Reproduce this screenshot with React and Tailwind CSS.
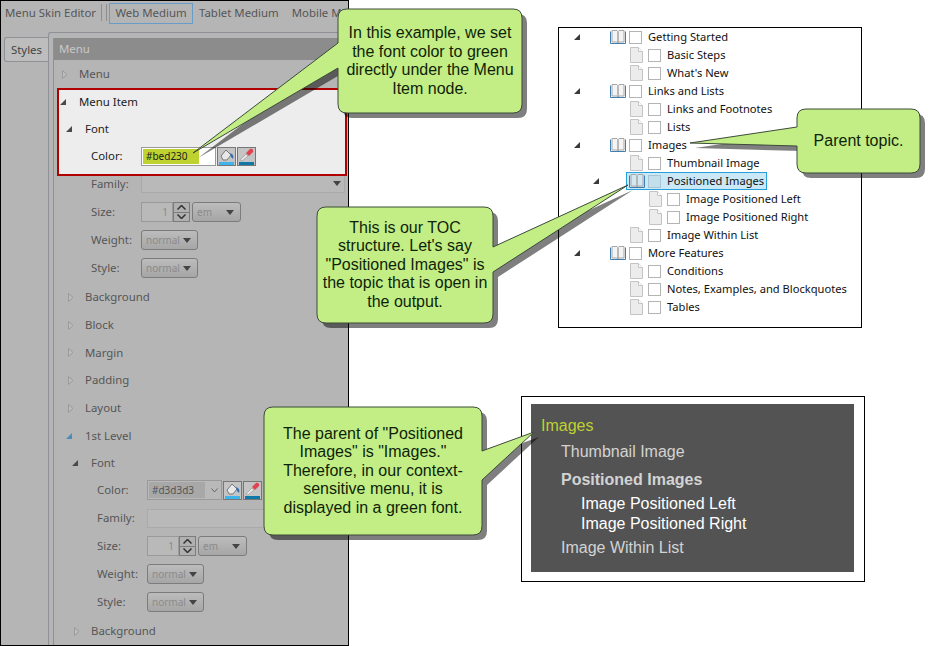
const uiFont = "font-['Noto_Sans',sans-serif] text-[11.4px] leading-none";

function Arrow({ open, blue, tree }) {
  if (open) {
    return (
      <svg width="6" height="6" viewBox="0 0 6 6" className="shrink-0">
        <polygon points="6,0 6,6 0,6" fill={blue ? "#4a8dbb" : tree ? "#3a3a3a" : "#4a4a4a"} />
      </svg>
    );
  }
  return (
    <svg width="6" height="9" viewBox="0 0 6 9" className="shrink-0 ml-[2px]">
      <polygon points="0.5,0.5 5,4.5 0.5,8.5" fill="#bdbdbd" stroke="#9a9a9a" />
    </svg>
  );
}

function TreeRow({ pad, h = "h-[28px]", extra = "", open, blue, dark, label }) {
  return (
    <div className={`flex items-center ${h} ${pad} ${extra}`}>
      <span className="w-[19px] flex items-center">
        <Arrow open={open} blue={blue} />
      </span>
      <span className={dark ? "text-[#222]" : "text-[#555]"}>{label}</span>
    </div>
  );
}

function Field({ pad, h = "h-[28px]", label, dark, children }) {
  return (
    <div className={`flex items-center ${h} ${pad}`}>
      <span className={`w-[50px] ${dark ? "text-[#222]" : "text-[#555]"}`}>{label}</span>
      {children}
    </div>
  );
}

function Caret() {
  return (
    <svg width="8" height="5" viewBox="0 0 8 5" className="shrink-0">
      <polygon points="0,0 8,0 4,5" fill="#444" />
    </svg>
  );
}

function Select({ w = "w-[57px]", text = "normal" }) {
  return (
    <div className={`${w} h-[20px] flex items-center justify-between pl-[4px] pr-[6px] rounded-[3px] border border-[#7c7c7c] bg-gradient-to-b from-[#bcbcbc] to-[#a6a6a6] text-[10px] text-[#8b8b8b]`}>
      {text}
      <Caret />
    </div>
  );
}

function Size() {
  return (
    <div className="flex items-center">
      <div className="w-[32px] h-[20px] border border-[#9a9a9a] bg-[#b9b9b9] flex items-center justify-end pr-[4px] text-[10px] text-[#8b8b8b]">1</div>
      <div className="w-[17px] h-[20px] flex flex-col border border-[#7c7c7c] bg-[#b0b0b0]">
        <div className="flex-1 flex items-center justify-center border-b border-[#7c7c7c]">
          <svg width="9" height="5" viewBox="0 0 9 5"><path d="M0.5 4.5 L4.5 0.5 L8.5 4.5" fill="none" stroke="#333" strokeWidth="1.5" /></svg>
        </div>
        <div className="flex-1 flex items-center justify-center">
          <svg width="9" height="5" viewBox="0 0 9 5"><path d="M0.5 0.5 L4.5 4.5 L8.5 0.5" fill="none" stroke="#333" strokeWidth="1.5" /></svg>
        </div>
      </div>
      <Select w="w-[49px] ml-[2px]" text="em" />
    </div>
  );
}

function Bucket() {
  return (
    <svg width="17" height="17" viewBox="0 0 17 17">
      <path d="M3 8 L8 2 L13 7 L9 12 H5 Z" fill="#e8e8e8" stroke="#777" />
      <path d="M12 5 C15 6 16 8 15 11 L13 9 Z" fill="#2f6fb5" />
      <rect x="1" y="14" width="15" height="3" fill="#3db4ea" />
    </svg>
  );
}

function Dropper() {
  return (
    <svg width="17" height="17" viewBox="0 0 17 17">
      <path d="M2 12 L8 6 L10 8 L4 13 Z" fill="#e6e6e6" stroke="#999" strokeWidth="0.7" />
      <path d="M8 5 L12 1 C14 0 16 2 15 4 L11 8 Z" fill="#e0434f" />
      <rect x="1" y="14" width="15" height="3" fill="#0f78a8" />
    </svg>
  );
}

function ToolButton({ children }) {
  return (
    <div className="w-[19px] h-[19px] ml-[1px] flex items-center justify-center border border-[#777] bg-[#c4c4c4]">
      {children}
    </div>
  );
}

function Book({ dim }) {
  return (
    <svg width="16" height="15" viewBox="0 0 16 15" className="shrink-0">
      <path d="M0.5 1.5 V13.5 H15.5 V1.5" fill="none" stroke="#3f7fb0" />
      <path d="M2 0.5 H7 L8 1.5 V13 L7 12 H2 Z M14 0.5 H9 L8 1.5 V13 L9 12 H14 Z" fill={dim ? "#d4e8f3" : "#f4f4f4"} stroke="#a6a6a6" />
    </svg>
  );
}

function Page() {
  return (
    <svg width="13" height="16" viewBox="0 0 13 16" className="shrink-0 ml-[1px]">
      <path d="M0.5 0.5 H8.5 L12.5 4.5 V15.5 H0.5 Z" fill="#ececec" stroke="#c4c4c4" />
      <path d="M8.5 0.5 V4.5 H12.5" fill="#fff" stroke="#c4c4c4" />
    </svg>
  );
}

const tocRows = [
  ["book", 0, "Getting Started"],
  ["page", 1, "Basic Steps"],
  ["page", 1, "What's New"],
  ["book", 0, "Links and Lists"],
  ["page", 1, "Links and Footnotes"],
  ["page", 1, "Lists"],
  ["book", 0, "Images"],
  ["page", 1, "Thumbnail Image"],
  ["book", 1, "Positioned Images", true],
  ["page", 2, "Image Positioned Left"],
  ["page", 2, "Image Positioned Right"],
  ["page", 1, "Image Within List"],
  ["book", 0, "More Features"],
  ["page", 1, "Conditions"],
  ["page", 1, "Notes, Examples, and Blockquotes"],
  ["page", 1, "Tables"],
];

const gutters = ["w-[51px] pl-[15px]", "w-[70px] pl-[34px]", "w-[89px]"];

function TocRow({ kind, level, text, selected }) {
  return (
    <div className="flex items-center h-[18px]">
      <div className={`${gutters[level]} shrink-0 flex items-center`}>
        {kind === "book" && <Arrow open tree />}
      </div>
      <div className={`flex items-center h-[18px] -ml-[3px] pl-[2px] pr-[2px] border ${selected ? "border-[#26a0da] bg-[#cbe8f6]" : "border-transparent"}`}>
        <span className="w-[19px] flex items-center">{kind === "book" ? <Book dim={selected} /> : <Page />}</span>
        <span className={`w-[13px] h-[13px] mr-[6px] border ${selected ? "border-[#a9c5d3] bg-[#c4dfec]" : "border-[#b4b4b4] bg-white"}`} />
        <span className="text-[#111] font-['Noto_Sans',sans-serif] text-[11.15px] leading-none whitespace-nowrap">{text}</span>
      </div>
    </div>
  );
}

// outline of a rounded box with one pointed tail on its left or right side
function calloutPath(w, h, side, a, b, tx, ty) {
  const r = 9;
  const right = side === "right" ? `V${a} L${tx} ${ty} L${w} ${b} ` : "";
  const left = side === "left" ? `V${b} L${tx} ${ty} L0 ${a} ` : "";
  return `M${r} 0 H${w - r} Q${w} 0 ${w} ${r} ${right}V${h - r} Q${w} ${h} ${w - r} ${h} H${r} Q0 ${h} 0 ${h - r} ${left}V${r} Q0 0 ${r} 0 Z`;
}

function Callout({ box, w, h, side, a, b, tx, ty, children }) {
  const d = calloutPath(w, h, side, a, b, tx, ty);
  return (
    <div className={`absolute z-20 ${box}`}>
      <svg width={w} height={h} viewBox={`0 0 ${w} ${h}`} className="absolute inset-0 overflow-visible">
        <path d={d} fill="#000" fillOpacity="0.5" transform="translate(5 5)" />
        <path d={d} fill="#c2ee85" stroke="#3d4a3a" strokeWidth="1" />
      </svg>
      <div className="relative h-full flex items-center justify-center text-center text-[#101f08] font-['Liberation_Sans',sans-serif] text-[16px] leading-[18.5px]">
        {children}
      </div>
    </div>
  );
}

export default function App() {
  return (
    <div className="relative w-[935px] h-[646px] bg-white flex overflow-hidden">
      {/* Skin editor */}
      <div className={`w-[349px] h-[646px] shrink-0 border border-black bg-[#b5b5b5] overflow-hidden ${uiFont}`}>
        <div className="flex items-center h-[23px] text-[#555] whitespace-nowrap">
          <span className="ml-[4px]">Menu Skin Editor</span>
          <span className="ml-[5px] w-[1px] h-[17px] bg-[#8e8e8e]" />
          <span className="ml-[4px] w-[1px] h-[17px] bg-[#8e8e8e]" />
          <span className="ml-[2px] w-[84px] h-[21px] mt-[1px] flex items-center justify-center border border-[#6a9cc9]">Web Medium</span>
          <span className="ml-[6px]">Tablet Medium</span>
          <span className="ml-[13px]">Mobile M</span>
        </div>
        <div className="flex h-[621px]">
          <div className="w-[47px] shrink-0 pt-[13px] pl-[3px]">
            <div className="h-[25px] w-[44px] flex items-center pl-[6px] text-[#444] bg-[#bdbdbd] border border-r-0 border-[#8e9196] rounded-tl-[3px] rounded-bl-[3px]">Styles</div>
          </div>
          <div className="flex-1 border-t border-l border-[#8e9196] rounded-tl-[3px] mt-[8px] pl-[4px] pt-[5px]">
            <div className="border-l border-[#8e9196] h-full">
              <div className="h-[22px] flex items-center pl-[5px] bg-[#8c8c8c] text-[#c8c8c8]">Menu</div>
              <TreeRow pad="pl-[6px]" label="Menu" />
              <div className="relative z-10 ml-[3px] w-[290px] h-[88px] -mb-[6px] border-2 border-[#b00000] bg-[#ededed]">
                <TreeRow pad="pl-[1px]" h="h-[24px]" open dark label="Menu Item" />
                <TreeRow pad="pl-[7px]" h="h-[30px]" open dark label="Font" />
                <Field pad="pl-[32px]" h="h-[24px]" dark label="Color:">
                  <div className="flex items-center">
                    <div className="w-[75px] h-[19px] border border-[#9a9a9a] bg-white p-[1px] flex">
                      <div className="w-[56px] h-full bg-[#bed230] flex items-center pl-[3px] text-[10px] text-[#222]">#bed230</div>
                    </div>
                    <ToolButton><Bucket /></ToolButton>
                    <ToolButton><Dropper /></ToolButton>
                  </div>
                </Field>
              </div>
              <Field pad="pl-[37px]" label="Family:">
                <div className="w-[204px] h-[19px] -mt-[1px] border border-[#aaa] bg-[#b9b9b9] flex items-center justify-end pr-[3px]"><Caret /></div>
              </Field>
              <Field pad="pl-[37px]" label="Size:"><Size /></Field>
              <Field pad="pl-[37px]" label="Weight:"><Select /></Field>
              <Field pad="pl-[37px]" label="Style:"><Select /></Field>
              <TreeRow pad="pl-[12px]" extra="mt-[1px]" label="Background" />
              <TreeRow pad="pl-[12px]" label="Block" />
              <TreeRow pad="pl-[12px]" h="h-[27px]" label="Margin" />
              <TreeRow pad="pl-[12px]" label="Padding" />
              <TreeRow pad="pl-[12px]" label="Layout" />
              <TreeRow pad="pl-[12px]" open blue label="1st Level" />
              <TreeRow pad="pl-[18px]" h="h-[26px]" open label="Font" />
              <Field pad="pl-[43px]" label="Color:">
                <div className="flex items-center">
                  <div className="w-[75px] h-[20px] border border-[#999] bg-[#b9b9b9] p-[1px] flex items-center">
                    <div className="w-[56px] h-full bg-[#a8a8a8] flex items-center pl-[3px] text-[10px] text-[#555]">#d3d3d3</div>
                    <svg width="7" height="5" viewBox="0 0 7 5" className="ml-[6px]"><path d="M0.5 0.5 L3.5 4 L6.5 0.5" fill="none" stroke="#666" /></svg>
                  </div>
                  <ToolButton><Bucket /></ToolButton>
                  <ToolButton><Dropper /></ToolButton>
                </div>
              </Field>
              <Field pad="pl-[43px]" label="Family:">
                <div className="w-[197px] h-[19px] border border-[#aaa] bg-[#b9b9b9]" />
              </Field>
              <Field pad="pl-[43px]" label="Size:"><Size /></Field>
              <Field pad="pl-[43px]" label="Weight:"><Select /></Field>
              <Field pad="pl-[43px]" label="Style:"><Select /></Field>
              <TreeRow pad="pl-[18px]" extra="mt-[1px]" label="Background" />
            </div>
          </div>
        </div>
      </div>

      {/* TOC and output */}
      <div className="ml-[172px] w-[344px] shrink-0">
        <div className="ml-[37px] mt-[27px] w-[304px] h-[301px] border border-black">
          {tocRows.map(([kind, level, text, selected]) => (
            <TocRow key={text} kind={kind} level={level} text={text} selected={selected} />
          ))}
        </div>
        <div className="mt-[68px] w-[344px] h-[186px] border border-black pt-[7px] pl-[9px] pr-[10px]">
          <div className="h-[168px] bg-[#535353] pl-[10px] pt-[13px] font-['Liberation_Sans',sans-serif] text-[16px] leading-[18px] text-[#d3d3d3]">
            <div className="text-[#bed230]">Images</div>
            <div className="ml-[20px] mt-[8px]">Thumbnail Image</div>
            <div className="ml-[20px] mt-[10px] font-bold">Positioned Images</div>
            <div className="ml-[40px] mt-[6px] text-white">Image Positioned Left</div>
            <div className="ml-[40px] mt-[2px] text-white">Image Positioned Right</div>
            <div className="ml-[20px] mt-[6px]">Image Within List</div>
          </div>
        </div>
      </div>

      <Callout box="left-[338px] top-[9px] w-[184px] h-[104px]" w={184} h={104} side="left" a={34} b={59} tx={-145} ty={144}>
        <div>In this example, we set<br />the font color to green<br />directly under the Menu<br />Item node.</div>
      </Callout>
      <Callout box="left-[317px] top-[207px] w-[176px] h-[116px]" w={176} h={116} side="right" a={40} b={65} tx={311} ty={-22}>
        <div>This is our TOC<br />structure. Let's say<br />"Positioned Images" is<br />the topic that is open in<br />the output.</div>
      </Callout>
      <Callout box="left-[264px] top-[407px] w-[218px] h-[128px]" w={218} h={128} side="right" a={44} b={73} tx={270} ty={25}>
        <div>The parent of "Positioned<br />Images" is "Images."<br />Therefore, in our context-<br />sensitive menu, it is<br />displayed in a green font.</div>
      </Callout>
      <Callout box="left-[797px] top-[109px] w-[123px] h-[64px]" w={123} h={64} side="left" a={18} b={37} tx={-107} ty={34}>
        <div>Parent topic.</div>
      </Callout>
    </div>
  );
}
